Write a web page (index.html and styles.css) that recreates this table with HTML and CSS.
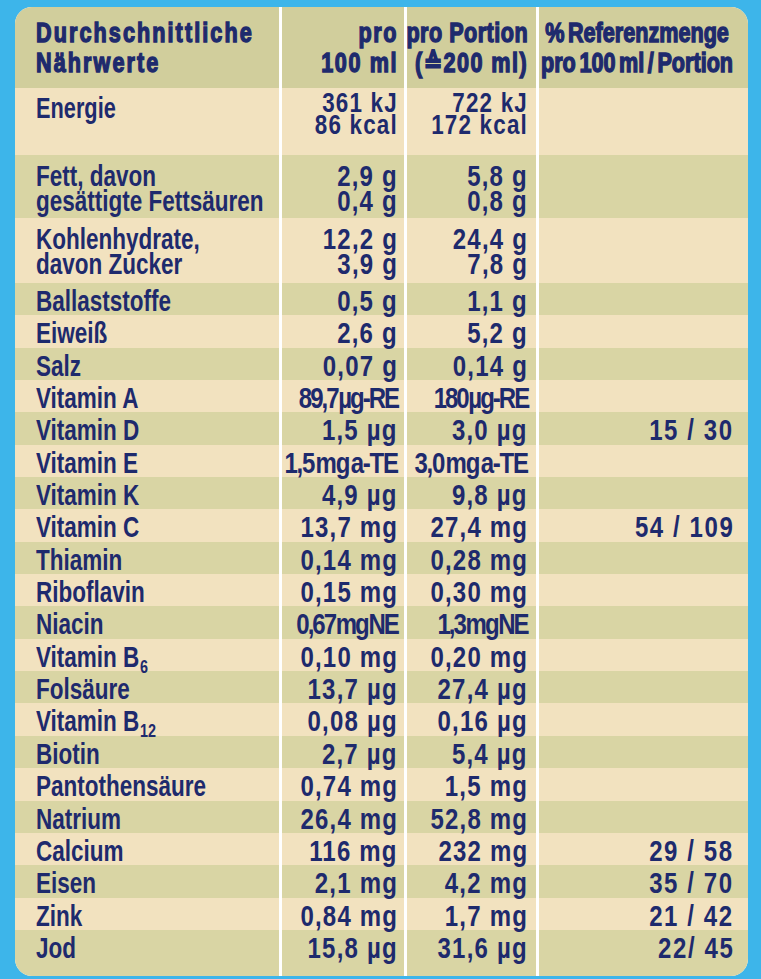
FILE: index.html
```html
<!DOCTYPE html>
<html lang="de">
<head>
<meta charset="utf-8">
<title>Nährwerte</title>
<link rel="stylesheet" href="styles.css">
</head>
<body>
<div class="panel">
  <div class="row head">
    <div class="c1"><span class="t">Durchschnittliche<br>Nährwerte</span></div>
    <div class="c2"><span class="t">pro<br>100 ml</span></div>
    <div class="c3"><span class="t">pro Portion<br><span class="wide">(≙200 ml)</span></span></div>
    <div class="c4"><span class="t">% Referenzmenge<br>pro 100 ml / Portion</span></div>
  </div>
  <div class="row tall r-energy">
    <div class="c1"><span class="t">Energie</span></div>
    <div class="c2"><span class="t">361 kJ<br>86 kcal</span></div>
    <div class="c3"><span class="t">722 kJ<br>172 kcal</span></div>
    <div class="c4"></div>
  </div>
  <div class="row tall r-fett">
    <div class="c1"><span class="t">Fett, davon<br>gesättigte Fettsäuren</span></div>
    <div class="c2"><span class="t">2,9 g<br>0,4 g</span></div>
    <div class="c3"><span class="t">5,8 g<br>0,8 g</span></div>
    <div class="c4"></div>
  </div>
  <div class="row tall r-kh">
    <div class="c1"><span class="t">Kohlenhydrate,<br>davon Zucker</span></div>
    <div class="c2"><span class="t">12,2 g<br>3,9 g</span></div>
    <div class="c3"><span class="t">24,4 g<br>7,8 g</span></div>
    <div class="c4"></div>
  </div>
  <div class="row"><div class="c1"><span class="t">Ballaststoffe</span></div><div class="c2"><span class="t">0,5 g</span></div><div class="c3"><span class="t">1,1 g</span></div><div class="c4"></div></div>
  <div class="row"><div class="c1"><span class="t">Eiweiß</span></div><div class="c2"><span class="t">2,6 g</span></div><div class="c3"><span class="t">5,2 g</span></div><div class="c4"></div></div>
  <div class="row"><div class="c1"><span class="t">Salz</span></div><div class="c2"><span class="t">0,07 g</span></div><div class="c3"><span class="t">0,14 g</span></div><div class="c4"></div></div>
  <div class="row"><div class="c1"><span class="t">Vitamin A</span></div><div class="c2"><span class="t sq2">89,7 µg-RE</span></div><div class="c3"><span class="t sq2">180 µg-RE</span></div><div class="c4"></div></div>
  <div class="row"><div class="c1"><span class="t">Vitamin D</span></div><div class="c2"><span class="t">1,5 µg</span></div><div class="c3"><span class="t">3,0 µg</span></div><div class="c4"><span class="t">15 / 30</span></div></div>
  <div class="row"><div class="c1"><span class="t">Vitamin E</span></div><div class="c2"><span class="t sq">1,5 mg a-TE</span></div><div class="c3"><span class="t sq">3,0 mg a-TE</span></div><div class="c4"></div></div>
  <div class="row"><div class="c1"><span class="t">Vitamin K</span></div><div class="c2"><span class="t">4,9 µg</span></div><div class="c3"><span class="t">9,8 µg</span></div><div class="c4"></div></div>
  <div class="row"><div class="c1"><span class="t">Vitamin C</span></div><div class="c2"><span class="t">13,7 mg</span></div><div class="c3"><span class="t">27,4 mg</span></div><div class="c4"><span class="t">54 / 109</span></div></div>
  <div class="row"><div class="c1"><span class="t">Thiamin</span></div><div class="c2"><span class="t">0,14 mg</span></div><div class="c3"><span class="t">0,28 mg</span></div><div class="c4"></div></div>
  <div class="row"><div class="c1"><span class="t">Riboflavin</span></div><div class="c2"><span class="t">0,15 mg</span></div><div class="c3"><span class="t">0,30 mg</span></div><div class="c4"></div></div>
  <div class="row"><div class="c1"><span class="t">Niacin</span></div><div class="c2"><span class="t sq2">0,67 mg NE</span></div><div class="c3"><span class="t sq2">1,3 mg NE</span></div><div class="c4"></div></div>
  <div class="row"><div class="c1"><span class="t">Vitamin B<sub>6</sub></span></div><div class="c2"><span class="t">0,10 mg</span></div><div class="c3"><span class="t">0,20 mg</span></div><div class="c4"></div></div>
  <div class="row"><div class="c1"><span class="t">Folsäure</span></div><div class="c2"><span class="t">13,7 µg</span></div><div class="c3"><span class="t">27,4 µg</span></div><div class="c4"></div></div>
  <div class="row"><div class="c1"><span class="t">Vitamin B<sub>12</sub></span></div><div class="c2"><span class="t">0,08 µg</span></div><div class="c3"><span class="t">0,16 µg</span></div><div class="c4"></div></div>
  <div class="row"><div class="c1"><span class="t">Biotin</span></div><div class="c2"><span class="t">2,7 µg</span></div><div class="c3"><span class="t">5,4 µg</span></div><div class="c4"></div></div>
  <div class="row"><div class="c1"><span class="t">Pantothensäure</span></div><div class="c2"><span class="t">0,74 mg</span></div><div class="c3"><span class="t">1,5 mg</span></div><div class="c4"></div></div>
  <div class="row"><div class="c1"><span class="t">Natrium</span></div><div class="c2"><span class="t">26,4 mg</span></div><div class="c3"><span class="t">52,8 mg</span></div><div class="c4"></div></div>
  <div class="row"><div class="c1"><span class="t">Calcium</span></div><div class="c2"><span class="t">116 mg</span></div><div class="c3"><span class="t">232 mg</span></div><div class="c4"><span class="t">29 / 58</span></div></div>
  <div class="row"><div class="c1"><span class="t">Eisen</span></div><div class="c2"><span class="t">2,1 mg</span></div><div class="c3"><span class="t">4,2 mg</span></div><div class="c4"><span class="t">35 / 70</span></div></div>
  <div class="row"><div class="c1"><span class="t">Zink</span></div><div class="c2"><span class="t">0,84 mg</span></div><div class="c3"><span class="t">1,7 mg</span></div><div class="c4"><span class="t">21 / 42</span></div></div>
  <div class="row last"><div class="c1"><span class="t">Jod</span></div><div class="c2"><span class="t">15,8 µg</span></div><div class="c3"><span class="t">31,6 µg</span></div><div class="c4"><span class="t">22/ 45</span></div></div>
</div>
</body>
</html>
```

FILE: styles.css
```css
html, body {
  margin: 0;
  padding: 0;
}
body {
  background: #3db5ea;
  width: 761px;
  height: 979px;
  overflow: hidden;
  box-sizing: border-box;
  padding: 7px 13px 3px 15px;
  font-family: "Liberation Sans", Arial, sans-serif;
  color: #1e2a6d;
}
.panel {
  height: 969px;
  border-radius: 17px;
  overflow: hidden;
  background: #ffffff;
  display: flex;
  flex-direction: column;
}
.row {
  display: grid;
  grid-template-columns: 264px 122px 129px 1fr;
  column-gap: 3px;
  height: 32.35px;
  flex: none;
  font-size: 30px;
  font-weight: 700;
  line-height: 24px;
  white-space: nowrap;
}
.row > div {
  display: flex;
  align-items: flex-start;
  background: #f2e2bf;
  padding-top: 6px;
  box-sizing: border-box;
  min-width: 0;
}
.row:nth-child(odd) > div {
  background: #d9d5a4;
}
.row.head > div {
  background: #d1ce9c;
}

/* condensed face: glyphs are squeezed horizontally */
.t {
  display: block;
  flex: none;
  transform: scaleX(0.8);
}
.c1 { padding-left: 21px; justify-content: flex-start; }
.c1 .t { transform: scaleX(0.75); transform-origin: 0 0; }

.c2, .c3, .c4 { justify-content: flex-end; }
.c2 .t, .c3 .t, .c4 .t {
  text-align: right;
  transform-origin: 100% 0;
  letter-spacing: 1.5px;
}
.c2 { padding-right: 6px; }
.c3 { padding-right: 8px; }
.c4 { padding-right: 14px; }
.c4 .t { letter-spacing: 2px; }

.head {
  height: 81px;
  font-size: 27px;
  line-height: 30px;
}
.head .t { -webkit-text-stroke: 1.4px #1e2a6d; }
.row.head > div { padding-top: 10.5px; }
.head .c1 .t { letter-spacing: 2.6px; transform: scaleX(0.8); }
.head .c2 .t { letter-spacing: 2px; transform: scaleX(0.8); }
.head .c3 .t { letter-spacing: 0.6px; transform: scaleX(0.8); }
.head .c3 .wide { letter-spacing: 1.8px; }
.head .c4 { justify-content: center; padding-right: 12px; }
.head .c4 .t {
  text-align: center;
  transform-origin: 50% 0;
  letter-spacing: 0;
  word-spacing: -3px;
  transform: scaleX(0.8);
}

.r-energy { height: 67px; font-size: 28px; line-height: 22px; }
.r-fett { height: 63px; }
.r-kh { height: 65px; }
.r-fett, .r-kh { line-height: 25px; }
.row.tall > div { padding-top: 8px; }
.row.r-energy > div { padding-top: 4.3px; }
.row.r-energy > .c1 { padding-top: 8.7px; font-size: 29px; }

.last { flex: 1 1 auto; }

.c2 .sq, .c3 .sq {
  letter-spacing: -1.5px;
  word-spacing: -5px;
}
.c2 .sq2, .c3 .sq2 {
  letter-spacing: -2.5px;
  word-spacing: -5px;
}
sub {
  font-size: 64%;
  line-height: 0;
  vertical-align: -6px;
  margin-left: 1px;
}
```
